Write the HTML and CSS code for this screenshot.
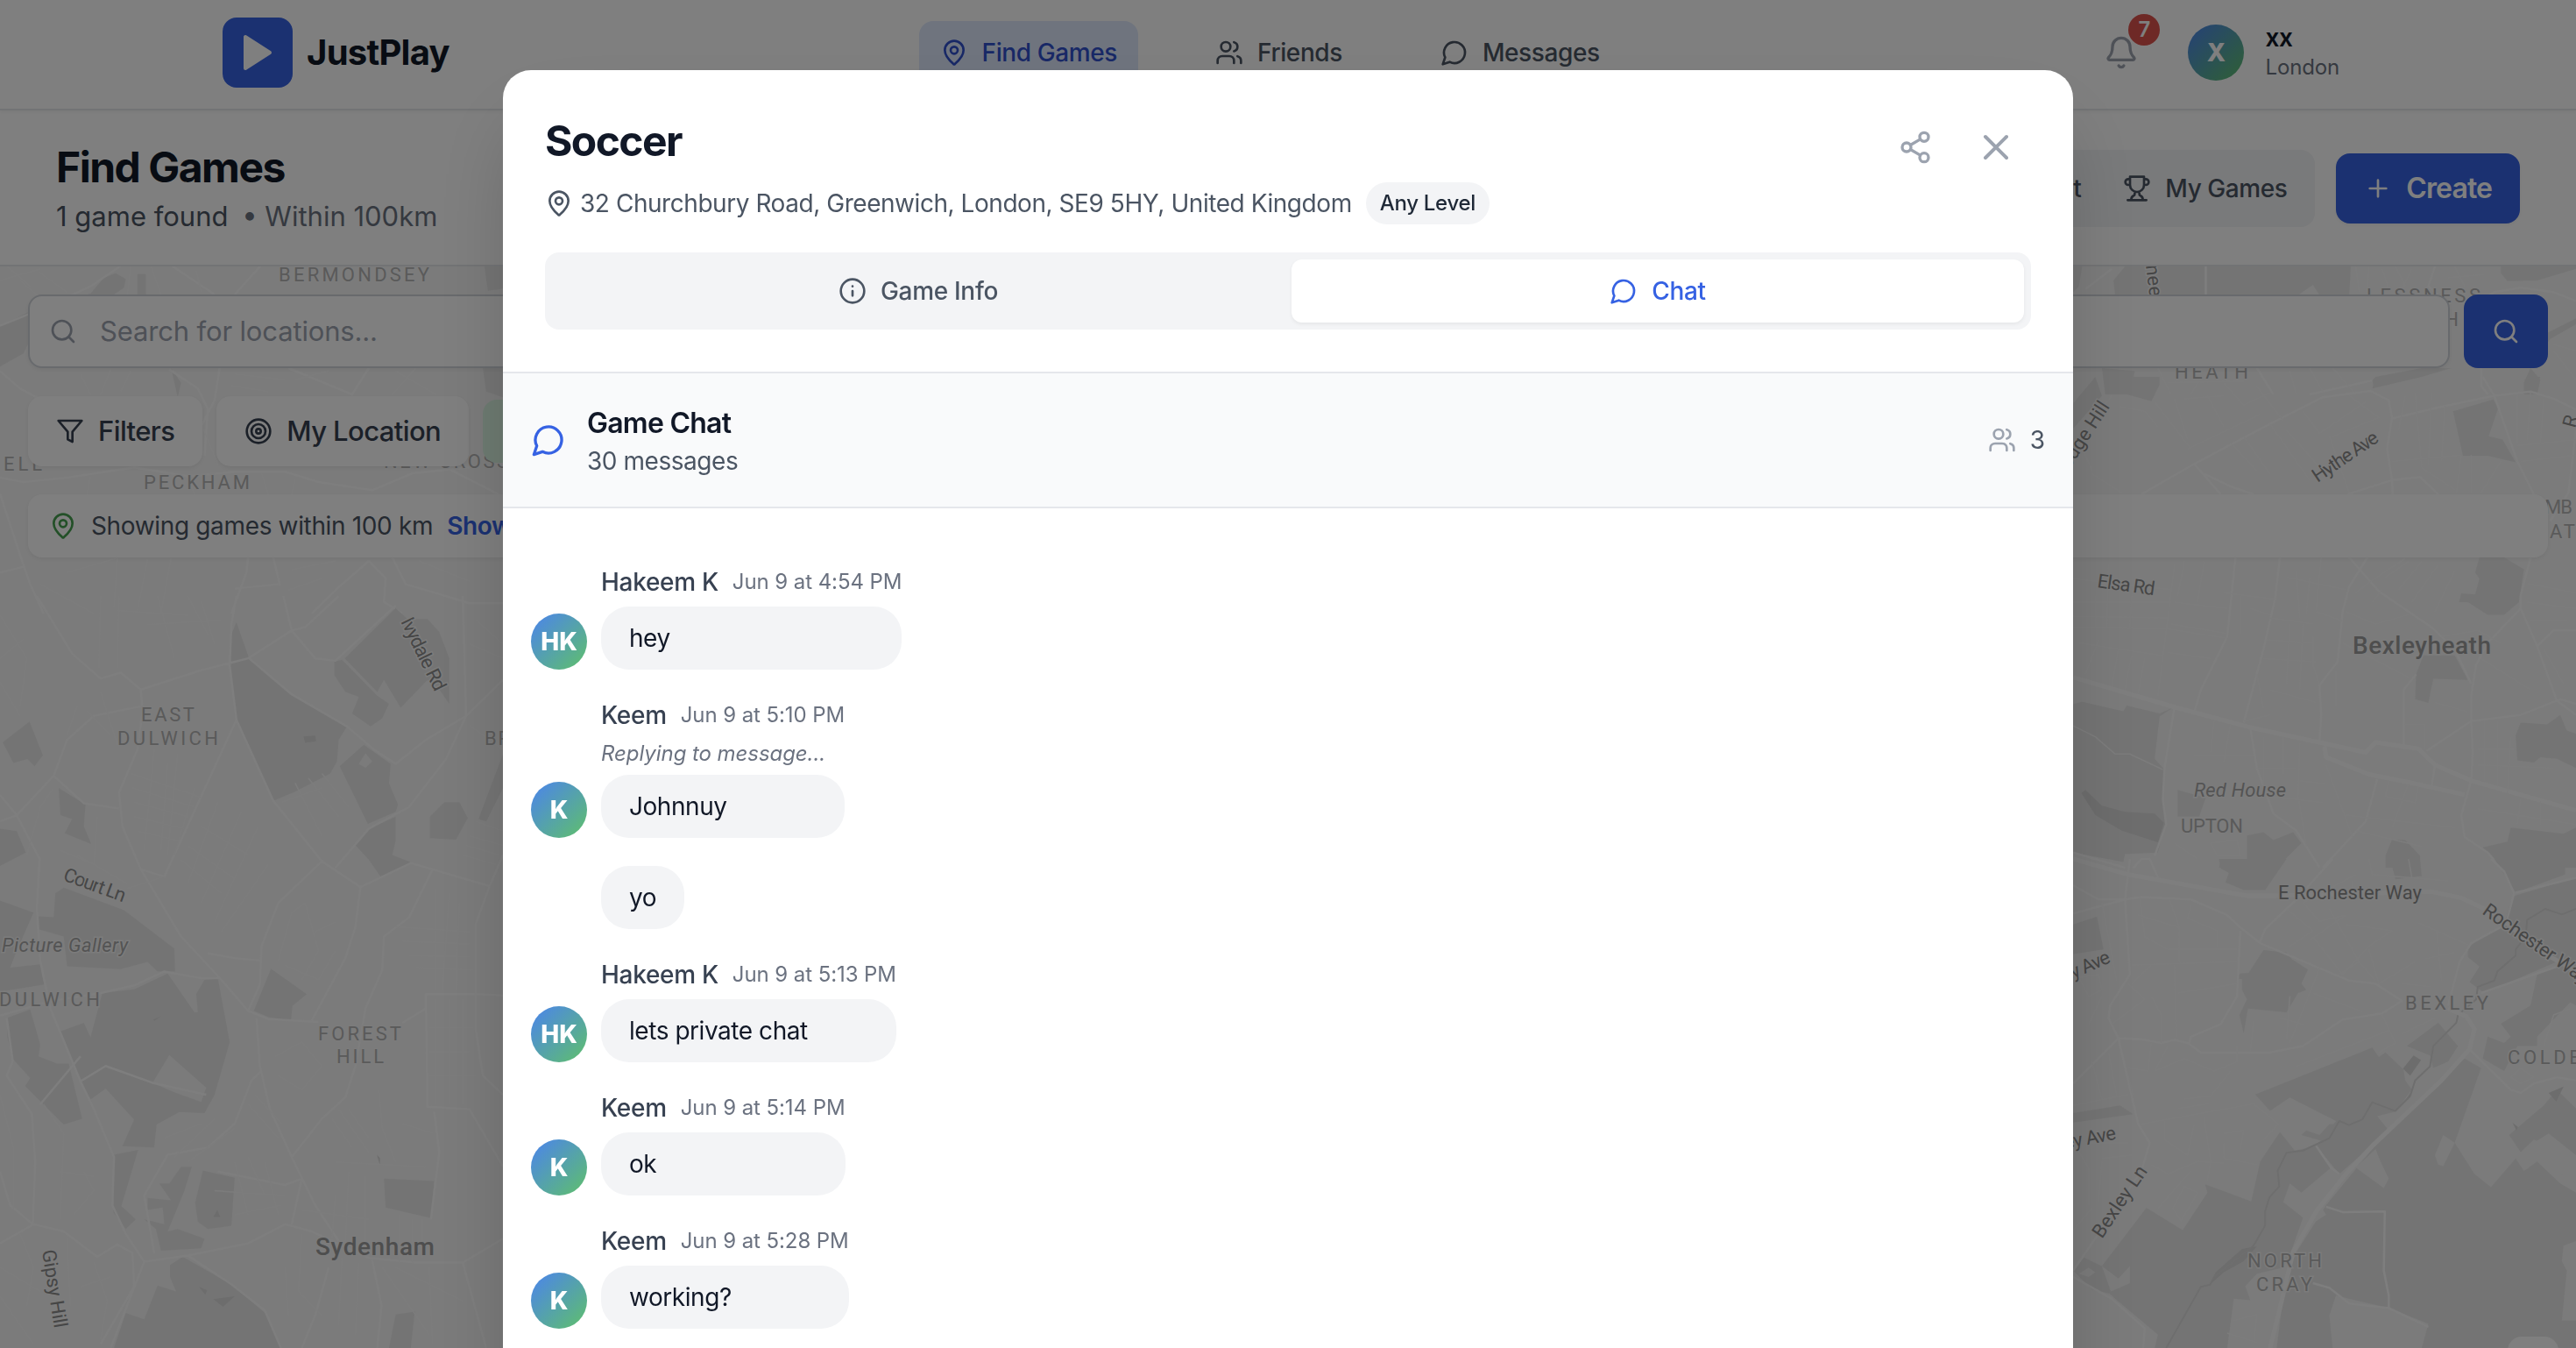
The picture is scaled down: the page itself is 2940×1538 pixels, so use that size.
FILE: index.html
```html
<!DOCTYPE html>
<html lang="en">
<head>
<meta charset="utf-8">
<title>JustPlay - Find Games</title>
<link rel="stylesheet" href="styles.css">
</head>
<body>
<svg class="sprite" aria-hidden="true">
  <symbol id="pin" viewBox="0 0 24 24"><path d="M20 10c0 4.993-5.539 10.193-7.399 11.799a1 1 0 0 1-1.202 0C9.539 20.193 4 14.993 4 10a8 8 0 0 1 16 0"/><circle cx="12" cy="10" r="3"/></symbol>
  <symbol id="users" viewBox="0 0 24 24"><path d="M16 21v-2a4 4 0 0 0-4-4H6a4 4 0 0 0-4 4v2"/><circle cx="9" cy="7" r="4"/><path d="M22 21v-2a4 4 0 0 0-3-3.87M16 3.13a4 4 0 0 1 0 7.75"/></symbol>
  <symbol id="message" viewBox="0 0 24 24"><path d="M7.9 20A9 9 0 1 0 4 16.1L2 22Z"/></symbol>
  <symbol id="bell" viewBox="0 0 24 24"><path d="M10.268 21a2 2 0 0 0 3.464 0M3.262 15.326A1 1 0 0 0 4 17h16a1 1 0 0 0 .74-1.673C19.41 13.956 18 12.499 18 8A6 6 0 0 0 6 8c0 4.499-1.411 5.956-2.738 7.326"/></symbol>
  <symbol id="trophy" viewBox="0 0 24 24"><path d="M6 9H4.5a2.5 2.5 0 0 1 0-5H6M18 9h1.500a2.500 2.500 0 0 0 0-5H18M4 22h16M10 14.660V17c0 .550-.470.980-.970 1.210C7.850 18.750 7 20.240 7 22M14 14.660V17c0 .550.470.980.970 1.210C16.150 18.750 17 20.240 17 22M18 2H6v7a6 6 0 0 0 12 0V2Z"/></symbol>
  <symbol id="plus" viewBox="0 0 24 24"><path d="M5 12h14M12 5v14"/></symbol>
  <symbol id="search" viewBox="0 0 24 24"><circle cx="11" cy="11" r="8"/><path d="m21 21-4.300-4.300"/></symbol>
  <symbol id="filter" viewBox="0 0 24 24"><path d="M22 3H2l8 9.460V19l4 2v-8.540L22 3Z"/></symbol>
  <symbol id="target" viewBox="0 0 24 24"><circle cx="12" cy="12" r="10"/><circle cx="12" cy="12" r="6"/><circle cx="12" cy="12" r="2"/></symbol>
  <symbol id="share" viewBox="0 0 24 24"><circle cx="18" cy="5" r="3"/><circle cx="6" cy="12" r="3"/><circle cx="18" cy="19" r="3"/><path d="m8.590 13.510 6.830 3.980M15.410 6.510l-6.820 3.980"/></symbol>
  <symbol id="close" viewBox="0 0 24 24"><path d="M18 6 6 18M6 6l12 12"/></symbol>
  <symbol id="info" viewBox="0 0 24 24"><circle cx="12" cy="12" r="10"/><path d="M12 16v-4M12 8h.010"/></symbol>
</svg>

<div class="page">
  <header class="topbar">
    <div class="topbar-inner">
      <div class="brand">
        <span class="brand-mark"><svg viewBox="0 0 80 80"><path d="M26 22v36L54 40Z" fill="#fff" stroke="#fff" stroke-width="4" stroke-linejoin="round"/></svg></span>
        <span class="brand-name">JustPlay</span>
      </div>
      <nav class="nav">
        <a class="nav-item active"><svg class="icon"><use href="#pin"/></svg>Find Games</a>
        <a class="nav-item"><svg class="icon"><use href="#users"/></svg>Friends</a>
        <a class="nav-item"><svg class="icon"><use href="#message"/></svg>Messages</a>
      </nav>
      <div class="account">
        <button class="bell"><svg class="icon icon-lg"><use href="#bell"/></svg><span class="badge">7</span></button>
        <div class="profile">
          <span class="avatar">X</span>
          <div><div class="profile-name">xx</div><div class="profile-place">London</div></div>
        </div>
      </div>
    </div>
  </header>

  <section class="subheader">
    <div>
      <h1 class="page-title">Find Games</h1>
      <p class="summary">1 game found <span class="summary-range">• Within 100km</span></p>
    </div>
    <div class="subheader-actions">
      <div class="segments">
        <button class="segment">List</button>
        <button class="segment"><svg class="icon"><use href="#trophy"/></svg>My Games</button>
      </div>
      <button class="create"><svg class="icon"><use href="#plus"/></svg>Create</button>
    </div>
  </section>

  <main class="map-area">
    <svg class="map" viewBox="0 304 2940 1234">
      <rect class="land" y="304" width="2940" height="1234"/>
      <!-- north-west -->
      <g transform="translate(0 300) scale(.3827 .3333)">
        <path class="park" d="M0 215 80 170 270 105 310 50 345 35 375 55 370 85 340 108 200 140 100 240 70 310 0 355ZM410 38h25v70h-25ZM1445 12h60v75l-50 8ZM510 360l30 50-10 50zM1440 360h60v100l-50-20z"/>
        <path class="road" d="M0 215 130 155 270 80 360 10M0 370 60 430 110 460M500 0 640 108M785 0 700 108M505 365 590 430 620 500 610 660M860 360 1050 450 1100 360M655 360 640 470 600 560M0 735 70 750 200 735 400 700 560 730 700 715 850 715 950 750 1110 778 1230 720 1400 700M0 790 60 1000 90 1100 130 1200M0 1060 70 1040M740 1008 735 1060 690 1200M815 1008 835 1105M700 1115 830 1100M1100 1020 1010 1110 930 1200M1100 1020 1150 1080 1145 1160 1200 1200M1170 1008 1210 1100 1300 1130 1400 1165 1500 1165M1300 550 1330 700 1500 800"/>
        <path class="street" d="M20 10 90 80M0 60 120 20M60 60 150 150M115 30 200 100M380 108 390 10M450 10 480 108M585 25 600 100M240 380 270 450M330 365 300 450M390 370 360 440M700 380 850 400M690 420 800 440M880 400 980 370M1180 370 1300 450M1240 360 1170 450M600 550 650 690M120 1100 280 1200M200 1060 350 1010M350 1010 340 1180M440 1015 410 1190M510 1010 480 1200M870 1050 1000 1020M860 1120 960 1080M1250 1020 1400 1090M880 740 870 790M780 720 800 790M560 735 580 790M270 730 260 790"/>
      </g>
      <!-- south-west -->
      <g transform="translate(0 680) scale(.3827 .5472)">
        <path class="park" d="M687 145 690 80 705 55 743 130 870 205 1035 272 1010 300 1005 345 985 370 880 408 815 427 703 258ZM1028 130 1180 25 1215 48 1275 48 1310 75 1340 130V225L1310 195 1275 175 1195 233 1145 175 1125 200ZM997 137 1020 133 1125 208 1160 225 1140 255 1105 272 1050 245 1070 210 1030 200 997 165ZM1013 355 1085 310 1165 350 1160 390 1187 435 1180 450 1097 475ZM1058 518 1100 485 1180 460V510L1170 540 1225 555 1137 587 1100 550ZM1282 460 1325 430H1370L1395 463 1360 508 1282 505ZM8 305 88 262 128 332 103 355 82 340 40 348ZM175 400 255 435 250 480 272 517 193 495 215 465 180 457ZM0 485 50 490 77 535 0 563ZM165 620 190 608 370 655 520 735 522 783H470L440 763 360 778 200 772 190 710 115 695V668L160 670ZM0 635 100 660 50 740 30 775 120 768 132 810 0 825ZM180 908 250 890 270 920 305 828 400 820 500 787 580 868H590L585 830 610 800 650 798 685 930 640 1040 610 1078 535 1076 467 1102 460 1150 365 1147 400 1092 315 1027 270 1050 240 1012ZM20 880 90 862 120 935 115 960 170 975H205L245 1090 190 1102 75 1022 90 1005 38 965 22 920ZM757 865 808 777 915 830 872 855 868 885 800 878ZM340 1165 412 1155 362 1272 405 1300 375 1320 338 1285ZM605 1198 700 1213 690 1313 620 1320 590 1305 582 1265ZM1145 1215 1295 1220 1285 1297 1150 1275ZM340 1568 375 1495 430 1508 470 1438 525 1450 507 1420V1395L545 1378 690 1435 790 1495 838 1568ZM1160 1568 1180 1498 1237 1492 1225 1568ZM1427 465 1500 330V400L1450 470ZM430 1300 490 1310 485 1275 440 1280V1255L510 1260 475 1225 505 1225 540 1190H572L550 1240 500 1325 530 1320 610 1340 600 1360 480 1365 465 1320Z"/>
        <path class="land" d="M455 1015 505 957 615 1025 600 1055 520 1035ZM1070 350 1090 328 1110 345 1090 358Z"/>
        <path class="water" d="M905 293 940 291 943 303 910 306ZM636 1466 700 1460 665 1482ZM593 1440 618 1448 612 1457ZM636 1295 648 1280 657 1295ZM457 883 481 876 460 886ZM1124 1165 1133 1172V1187Z"/>
        <path class="road" d="M110 0 215 120 300 172 360 160 420 195 425 240 410 320 355 410 365 480 420 570 540 710 660 800 740 865 800 882 950 888M420 195 600 155 740 130 870 72 910 65 1010 0M705 0 690 60 685 145 705 258 815 427 960 553 1075 607 1225 557 1290 570 1460 605M743 130 870 205 1035 272 1115 320 1180 350 1270 300 1390 250 1500 175M420 230 280 250 200 300 160 375 50 457 0 470M160 375 250 432 355 443M0 415 50 457 118 548 110 650 120 760 150 860 240 1012 280 1070 340 1170 335 1270 375 1330 430 1388M0 875 150 845 300 828 400 812 490 783 600 797 655 797M765 880 775 980 805 1070 870 1170 940 1270 1010 1345M870 1170 960 1090 1030 1045 1060 980 1090 860 1140 780 1145 710 1220 670 1290 570M0 1350 100 1310 190 1325 290 1378 350 1352 395 1370 400 1440 300 1560M330 1568 430 1388 560 1375 740 1350 850 1310 930 1325 1100 1380 1240 1390H1380L1500 1340M560 1375 690 1435 790 1490 838 1568M500 1165 430 1250 460 1370M500 1165 620 1150 700 1100 750 1010 780 990M960 553 830 640 780 730 775 810 740 865M1000 567 1100 485 1220 440 1330 340 1390 250 1380 0M845 0 870 72 940 130 1000 135 1180 20M1075 607 1060 690 1030 755 930 885M1460 605 1418 685V900L1440 1000 1500 1040M1270 830 1275 1065 1400 1070 1500 1190M1295 1075 1310 1160 1285 1300M1200 890 1270 860V830H1420L1500 833M20 880 38 970 20 1000 95 1080 105 1180 98 1310M120 1060 240 960M705 258 490 585 420 570M650 1200 850 1228 900 1215 870 1310M1110 1385 1138 1480 1125 1568M980 1400 940 1500 900 1568M1500 540 1460 605M1380 1390 1450 1568M0 1200 30 1270 98 1310M620 745 700 755 775 760M240 1012 315 980 455 1015 615 1040"/>
        <path class="street" d="M355 0 350 150M300 0 295 150M350 30 560 40M470 0 520 130M560 0 620 80M440 60 660 50M600 10 640 100M230 230 200 290M260 240 330 290M300 200 350 310M390 370 600 420M395 400 580 440M400 430 560 460M400 460 550 485M410 490 530 510M460 320 430 530M500 350 480 530M530 330 500 540M580 400 520 540M560 520 700 590M540 550 660 620M600 480 740 540M650 430 560 600M720 450 600 640M770 480 640 680M800 560 660 700M880 390 960 500M920 380 1010 460M960 370 1040 440M840 430 960 400M1400 500 1500 520M1390 520 1490 540M1380 540 1480 560M1420 470 1500 490M1180 690 1400 700M1200 720 1400 725M1220 750 1400 752M1240 775 1410 780M1300 610 1300 820M1340 620 1320 820M1370 640 1360 820M1300 840V1060M1340 840V1060M1380 840V1060M1280 900H1410M1280 950H1400M1280 1000H1420M830 760 870 660 910 640M910 640 950 740 900 800M850 770 950 800 1000 740M940 700 1000 680M820 960 900 930 960 980 900 1030 830 1000M740 1060 830 1130M760 1040 840 1100M990 1090 1050 1150M1010 1070 1100 1160M1040 1070 1100 1130M1130 1030 1140 1110 1180 1180M1200 1100 1290 1120M1000 1180 1270 1190M900 1280 1100 1300M1000 1250 990 1340M1040 1200 1030 1350M1090 1210V1360M1190 1290V1390M1230 1300V1390M1260 1300V1380M130 1060 190 1120 180 1300M250 1200 280 1240 220 1290M0 1040 40 1150V1280M180 1200 280 1210M490 1130 600 1100M520 1170 640 1090M560 1180 700 1110M700 1180 740 1290M740 1170 790 1250M790 1180 830 1290M640 1240 850 1250M700 1290 840 1270M60 1330 100 1400 80 1480M0 1400 120 1450M0 1460 100 1560M200 1340 210 1480M280 1390 320 1470 300 1550M240 1440 330 1420M850 1400 860 1500M900 1330 890 1450 960 1500M1020 1380 1010 1520M1070 1390 1060 1540M1140 1400 1280 1540M1180 1400 1380 1470M1280 1400 1290 1560M1400 100 1500 130M1420 50 1500 100M1400 270 1500 320M0 40 80 130 60 230M0 130 70 90M0 180 60 250M80 540 120 440 160 400M290 460 280 560 180 530M230 540 380 600M380 610 490 585"/>
      </g>
      <!-- north-east -->
      <g transform="translate(2350 0) scale(.3763 .3333)">
        <path class="park" d="M43 912H70L60 980 43 1000ZM200 912H885L880 1010H790L770 975 725 1010H170L165 960ZM1340 912H1568V920L1450 960 1360 962 1340 935ZM1400 1200 1480 1140 1568 1090V1110L1490 1160 1440 1235 1420 1260ZM130 1260 230 1270 215 1350H140ZM950 1330 960 1290 1100 1260H1190L1100 1290ZM1410 1310 1430 1260 1460 1300 1450 1350H1410Z"/>
        <path class="road" d="M445 912V1010M80 990 160 920M1230 1060 1320 1000 1400 985 1500 1000 1568 1030M1280 1240V1320L1300 1350M1140 912 1120 980 1150 1010M760 1350 960 1300M600 1260 650 1350"/>
        <path class="street" d="M900 912 910 1000M940 912 935 1000M980 920 1000 990M1020 912 1050 980M1070 920 1040 990M1200 912 1230 980M1180 950 1290 940M1500 1180 1568 1200M1500 1200 1568 1300M330 1310 560 1305M300 1260 340 1350M420 1310 400 1350M700 1270 720 1350M760 1260 800 1340M830 1260 900 1350"/>
      </g>
      <!-- east -->
      <g transform="translate(2350 430) scale(.3763 .3571)">
        <path class="park" d="M1195 110 1317 72 1332 100 1303 190 1345 200 1385 273 1300 252H1225ZM1275 577H1350L1410 615 1395 720 1350 760H1300L1240 720H1213L1220 692 1262 695 1275 645 1262 625ZM1105 890H1200L1240 968 1135 965 1120 1042 1080 1030 1083 950ZM43 1045 70 1038 195 1068 205 1050 305 1075 345 1057 305 1085 290 1220 320 1255 315 1350 322 1430 300 1520 200 1525 195 1550 43 1520ZM360 1320 445 1345 425 1405H360ZM1385 1145 1400 1105 1480 1110 1520 1080 1540 1130 1568 1140V1250L1510 1220 1460 1215 1440 1232 1390 1225ZM570 1465 620 1455 650 1480 710 1455 735 1490 660 1568H485L490 1550 570 1545ZM1285 1503 1360 1485 1370 1440 1530 1460 1568 1440V1568H1340ZM990 1530 1010 1478 1050 1480 1095 1530V1568H990ZM175 20 210 0H305V25L280 78 185 50ZM43 85 110 0 130 60 43 165ZM950 10 960 0H1030L955 35ZM1410 10 1430 0H1460L1450 20Z"/>
        <path class="water" d="M68 1330 80 1320 130 1370 200 1390 290 1395 318 1425 300 1487 190 1450 110 1400Z"/>
        <path class="road" d="M250 375 410 278 640 150 800 65 945 45 1000 75 1010 130 995 230 1010 330 1012 375M1010 133 1140 100 1320 60 1430 47 1500 70 1568 105M1285 0 1320 60 1340 120 1390 270 1440 375M875 375 1010 330 1095 320 1150 375M410 278 490 375M440 310 520 350 590 375M535 577 510 830 430 1000 412 1065M670 577 655 710 620 870 560 1105M935 577 880 670 860 750 845 910 790 985 795 1080 790 1165M880 577 970 685 1130 800 1200 870 1250 980M1430 577 1400 700V740L1300 850 1265 920 1250 1020V1100L1255 1200 1250 1290 1220 1400 1230 1470 1300 1520 1340 1568M1400 740 1450 860 1510 1035 1568 1080M1115 1195 1250 1100 1400 1080 1520 1030 1568 1045M350 1055 320 1250 315 1350 325 1430 290 1530M965 1285 930 1420 800 1568M580 1120 600 1250 650 1395 720 1450 790 1568M43 1520 200 1568M1568 170 1545 370 1490 460M1083 950 1045 1000V1190M1450 860 1500 810H1568M1140 1240 1130 1310"/>
        <path class="avenue" d="M43 960 350 1055 580 1120 930 1200 960 1168 1090 1188 1140 1240 1250 1290 1450 1350 1568 1385M805 1180 810 1215 940 1270 1060 1295 1230 1335"/>
        <path class="street" d="M43 1115 110 1150 170 1205H215L315 1255M160 60 40 230M185 95 260 110 300 160M290 80 400 230M380 70 500 60M350 70 390 200M390 230 610 120M450 60 500 160M600 30 680 140M500 20 560 90 640 50M520 210 600 300M560 190 640 310M640 150 760 330M690 170 800 300M740 110 790 180 930 80M820 190 880 370M880 60 970 130 830 190M1050 60 1030 170M1080 50 1100 290M1130 50 1120 280M1170 90 1160 270M1220 250 1205 370M1100 290 1200 360M1010 270 1220 250M1250 250V370M1340 270 1280 370M1390 60V210M1430 50 1420 200M1390 220 1568 200M1470 70 1460 210M1400 270 1568 250M100 300 60 200M100 310 190 370M43 645 340 680M43 720H340M43 765 330 770M43 800 330 805 510 835M110 700V800M150 600 145 800M220 700 215 800M350 600 300 1020M380 590 360 700M440 590 420 720M350 720 510 740M340 790 510 820M330 880 460 900M120 840 80 950M180 870 160 990M220 890 200 1000M260 900 240 1010M60 850 310 890M550 700V820M500 690 655 710M580 740 640 760M690 640 870 680M720 620 730 770M760 640 750 760M640 770 770 790M630 840 770 850M620 900 780 910M700 790 690 980M740 790 730 1000M600 950 620 1060M640 1000 780 1040M560 1100 640 1080M780 750 860 780M795 577 780 745M770 830V920L790 985M840 940V1050M870 750 960 790 1060 760M900 690 950 650 1050 580M950 720 980 680M990 640 1060 590M1030 680 1100 590M1070 720 1150 600M1140 750 1200 620M860 850 1060 960M1160 830 1270 810 1340 850M1280 900 1430 1000M1430 780H1540M1420 720 1568 740M1420 660 1568 690M1470 870 1530 980M1050 1110H1110V1190M1140 1040 1240 1070M1290 1100V1290M1330 1100V1310M1370 1150 1360 1330M1270 1190H1380M1270 1240 1500 1250M470 1100 460 1200M520 1110 500 1230M410 1210 590 1210M600 1250 720 1250M620 1150V1300M680 1150V1270M730 1170 725 1340 750 1500M730 1290 810 1300M640 1340 800 1360M810 1240 890 1470M1000 1290 990 1340 1080 1360 1090 1310M1060 1300 1010 1440M870 1400 1200 1440M900 1450 1100 1500M460 1490 540 1480 550 1530 480 1530ZM350 1490 420 1540M1270 1380 1568 1430M1400 1350 1390 1430M1460 1355V1430"/>
      </g>
      <!-- south-east -->
      <g transform="translate(2350 980) scale(.3763 .3559)">
        <path class="park" d="M485 0H690L625 100H560L505 75 515 45 490 30ZM1005 0H1095L1100 55 1020 65ZM1320 0H1535V50L1385 108ZM43 210 115 185 135 290 43 305ZM575 365 620 292 690 300 705 320 755 355 735 400 750 420 725 430 690 492 573 480 560 560 547 500 570 450 555 420V385H540V368ZM1375 120 1568 60V370L1530 320 1290 430 1245 395 1275 345 1240 315V285L1270 260 1350 210ZM1450 370 1568 325V470L1550 460 1450 570V600L1390 600 1350 680 1285 640 1300 570 1350 590 1370 570 1340 528 1430 470ZM1055 600 1150 525 1210 600 1180 650 1135 670 1125 630ZM595 755 950 605 970 635 990 620 1045 675 1050 710 1070 740 1020 810 965 825 1000 870 850 1010 780 920 840 840 700 765 640 808ZM43 815 185 790 225 818 43 845ZM670 875 715 935 780 920 825 990 735 1070 700 1040 680 1100 740 1150 700 1270 680 1310 600 1330 565 1370 580 1415 530 1410 510 1568H290L300 1525 170 1410 150 1390 215 1360 215 1305 180 1345 130 1305 265 1118 375 1190 450 1070 443 1043 583 1098 610 970ZM43 1320 75 1278 130 1305 160 1395 100 1380ZM1230 640 1280 670 1200 910 1260 1010 1310 1052 1385 960 1410 1000 1450 970 1520 1040 1568 1070V1568H1100L1120 1490 1000 1440 880 1425 840 1400 820 1465 830 1568H660L680 1400 690 1330 720 1260 810 1110 950 930 1110 765ZM1365 885 1470 790 1510 740 1568 800V960L1440 900 1400 940ZM735 885 750 870 790 885 820 850 840 850 800 905ZM1480 850 1500 840 1510 860Z"/>
        <path class="land" d="M900 990 960 930 975 970 1000 1025 985 1055ZM1140 950 1165 885 1200 910 1165 985 1150 980ZM1530 1240 1568 1225V1480H1525L1540 1320 1525 1290ZM840 1400 1000 1440 1020 1480 980 1500 910 1495 820 1465ZM1440 910 1485 880 1568 950V1040L1510 1000H1485ZM60 1330 90 1310 110 1325 90 1340ZM835 1535H900V1568H835ZM790 1110 810 1140 740 1190Z"/>
        <path class="water" d="M1043 672 1075 630 1098 645 1065 695ZM1485 750 1530 730 1508 778ZM600 1242 555 1250 475 1325 458 1365 500 1325 560 1290ZM1375 845 1392 860 1387 870ZM1050 775 1075 735 1060 770Z"/>
        <path class="river" d="M1568 160 1525 178 1475 160 1420 195 1415 250 1385 290V310L1330 360 1320 390 1270 410 1265 450 1210 500 1205 525 1135 600 1125 665 1080 710 1065 760 1020 808 950 780 920 835 880 853 850 840 820 895 740 935 690 942 663 1000 668 1050 638 1085 625 1130V1175L590 1240 470 1340 458 1365 430 1372 325 1568"/>
        <path class="avenue" d="M43 0 210 50 500 105 570 118H660L1130 105 1220 125 1330 180 1450 290 1568 360M1180 480 1235 505 1260 545 1245 610 1160 710 1110 760 950 920 870 1010 780 1130 710 1260 670 1440 640 1568"/>
        <path class="road" d="M1310 0 1350 40 1380 110 1355 210 1250 270 1215 330 1180 470M1245 610 1370 740 1400 750 1440 720 1510 700 1568 710M215 0 200 130 215 370 155 470 150 510 180 575 240 850 275 910 250 1000 43 1320M180 575 250 578 310 590 350 580 390 590 430 620H640L740 600 860 515 980 495 1040 455 960 400 880 390 790 350 610 270 550 220 510 180 400 130 250 122 200 130M550 230 545 330 540 440 490 530 400 570 395 590M180 575 43 720M1385 108 1568 60M43 85 120 130 200 130 43 175M610 265 625 225 720 130M225 30 250 0H275L300 60M830 0 720 130M1280 430 1550 330M810 1115 860 1132 988 1130 985 1320 1000 1400V1440M43 1340 160 1410 260 1505 255 1568M780 920 825 990 850 1010M770 1360 820 1375 880 1425 1000 1440 1120 1500"/>
        <path class="street" d="M130 140 175 390M245 120 260 250 330 290 540 290M335 130 365 220V330M220 340 540 330M365 220 240 180M400 150 390 190 480 230V280M350 340 355 570M210 400 260 450 160 530M280 440 310 500V590M220 400 280 340M360 430 540 400M690 160 770 230 700 280M740 140 790 200 870 180 760 260M820 160 910 330 960 390M770 250 860 370 940 280 1010 230 870 210M910 330 850 370M940 290 970 400 1080 330M1090 205 1240 275M1145 230 1160 390M1110 320 1200 300M1040 400 1130 410M790 350 700 590M770 430 920 490M700 440 690 580M590 520 580 620M670 510 740 530M1040 560 1140 510M720 665 1000 550M980 500 1020 590 970 620M150 620 175 760M100 650 130 770M210 690 230 790M43 790 210 755M280 590 270 680 210 670M330 600 290 680 380 640 470 680 540 650V600M520 680 460 760 380 770M360 800 455 785M250 850 590 785 665 850 620 900M320 840V900L390 950 410 850M440 830 460 970 450 1030M500 880 560 870 550 930M500 910V960L600 980M280 980 330 1010 420 970 500 975M130 960 220 950M80 910H210M43 910 90 990V1110M120 1100 130 970M43 1190 100 1120M300 1120 400 1000M345 1120 370 1160 420 1070 380 1050ZM740 140 900 50M60 380 120 370 130 420 90 440ZM90 530 130 440M1470 600 1500 500 1550 480M1370 700 1400 670 1440 700 1400 720ZM530 1480 600 1460 590 1568M510 1520 600 1550M1060 0 1070 60M940 0 950 50 1180 70M890 70V120"/>
      </g>
      <g class="place">
        <text x="318" y="321" textLength="172">BERMONDSEY</text>
        <text x="4" y="537" textLength="44">ELL</text>
        <text x="164" y="558" textLength="121">PECKHAM</text>
        <text x="438" y="534" textLength="142">NEW CROSS</text>
        <text x="2482" y="432" textLength="84">HEATH</text>
        <text x="2701" y="345" textLength="130">LESSNESS</text>
        <text x="2722" y="372" textLength="84">HEATH</text>
        <text x="161" y="823" textLength="61">EAST</text>
        <text x="134" y="850" textLength="115">DULWICH</text>
        <text x="553" y="850" textLength="120">BROCKLEY</text>
        <text x="-1" y="1148" textLength="115">DULWICH</text>
        <text x="363" y="1187" textLength="95">FOREST</text>
        <text x="384" y="1213" textLength="54">HILL</text>
        <text x="2489" y="950" textLength="71">UPTON</text>
        <text x="2904" y="586" textLength="32">MB</text>
        <text x="2910" y="614" textLength="29">AT</text>
        <text x="2745" y="1152" textLength="95">BEXLEY</text>
        <text x="2862" y="1214" textLength="84">COLDB</text>
        <text x="2565" y="1446" textLength="85">NORTH</text>
        <text x="2575" y="1473" textLength="64">CRAY</text>
      </g>
      <g class="landmark">
        <text x="2" y="1086" textLength="144">Picture Gallery</text>
        <text x="2504" y="909" textLength="105">Red House</text>
      </g>
      <g class="town">
        <text x="360" y="1432" textLength="136">Sydenham</text>
        <text x="2685" y="746" textLength="158">Bexleyheath</text>
      </g>
      <g class="way">
        <text transform="translate(71 1004) rotate(20)" textLength="74">Court Ln</text>
        <text transform="translate(457 709) rotate(64)" textLength="90">Ivydale Rd</text>
        <text transform="translate(48 1427) rotate(81)" textLength="90">Gipsy Hill</text>
        <text transform="translate(2355 546) rotate(-57)" textLength="98">Lodge Hill</text>
        <text transform="translate(2645 551) rotate(-34)" textLength="86">Hythe Ave</text>
        <text transform="translate(2393 670) rotate(8)" textLength="66">Elsa Rd</text>
        <text x="2600" y="1026" textLength="164">E Rochester Way</text>
        <text transform="translate(2832 1042) rotate(35)" textLength="142">Rochester Way</text>
        <text transform="translate(2357 1121) rotate(-24)" textLength="58">ey Ave</text>
        <text transform="translate(2357 1311) rotate(-11)" textLength="60">ey Ave</text>
        <text transform="translate(2399 1414) rotate(-56)" textLength="94">Bexley Ln</text>
        <text transform="translate(2449 303) rotate(83)" textLength="36">nee</text>
        <text transform="translate(2939 489) rotate(-75)">R</text>
      </g>
    </svg>

    <div class="map-tools">
      <div class="search-row">
        <label class="search-box"><svg class="icon"><use href="#search"/></svg><span>Search for locations...</span></label>
        <button class="search-button"><svg class="icon"><use href="#search"/></svg></button>
      </div>
      <div class="chips">
        <button class="chip"><svg class="icon"><use href="#filter"/></svg>Filters</button>
        <button class="chip"><svg class="icon"><use href="#target"/></svg>My Location</button>
        <span class="chip-near"></span>
      </div>
      <div class="notice"><svg class="icon"><use href="#pin"/></svg><span>Showing games within 100 km</span><a>Show all</a></div>
    </div>
    <span class="map-control"></span>
  </main>
</div>

<div class="overlay">
  <div class="modal">
    <div class="modal-head">
      <div class="title-row">
        <div>
          <h2 class="modal-title">Soccer</h2>
          <div class="venue"><svg class="icon"><use href="#pin"/></svg><span class="address">32 Churchbury Road, Greenwich, London, SE9 5HY, United Kingdom</span><span class="level">Any Level</span></div>
        </div>
        <div class="modal-actions">
          <button class="plain"><svg class="icon icon-lg"><use href="#share"/></svg></button>
          <button class="plain"><svg class="icon icon-xl"><use href="#close"/></svg></button>
        </div>
      </div>
      <div class="tabs">
        <button class="tab"><svg class="icon"><use href="#info"/></svg>Game Info</button>
        <button class="tab selected"><svg class="icon"><use href="#message"/></svg>Chat</button>
      </div>
    </div>
    <div class="chat-head">
      <svg class="icon icon-lg"><use href="#message"/></svg>
      <div class="chat-heading"><div class="chat-title">Game Chat</div><div class="chat-count">30 messages</div></div>
      <div class="members"><svg class="icon"><use href="#users"/></svg>3</div>
    </div>
    <div class="messages">
      <div class="message"><span class="avatar">HK</span><div class="body"><div class="meta"><span class="author">Hakeem K</span><time>Jun 9 at 4:54 PM</time></div><div class="bubble">hey</div></div></div>
      <div class="message"><span class="avatar">K</span><div class="body"><div class="meta"><span class="author">Keem</span><time>Jun 9 at 5:10 PM</time></div><div class="reply">Replying to message...</div><div class="bubble">Johnnuy</div></div></div>
      <div class="message follow"><div class="body"><div class="bubble">yo</div></div></div>
      <div class="message"><span class="avatar">HK</span><div class="body"><div class="meta"><span class="author">Hakeem K</span><time>Jun 9 at 5:13 PM</time></div><div class="bubble">lets private chat</div></div></div>
      <div class="message"><span class="avatar">K</span><div class="body"><div class="meta"><span class="author">Keem</span><time>Jun 9 at 5:14 PM</time></div><div class="bubble">ok</div></div></div>
      <div class="message"><span class="avatar">K</span><div class="body"><div class="meta"><span class="author">Keem</span><time>Jun 9 at 5:28 PM</time></div><div class="bubble">working?</div></div></div>
    </div>
  </div>
</div>
</body>
</html>
```
FILE: styles.css
```css
* { box-sizing: border-box; }
body { margin: 0; height: 1538px; overflow: hidden; font: 28px/40px Inter, "Liberation Sans", sans-serif; letter-spacing: -.45px; color: #111827; background: #fff; }
h1, h2, p { margin: 0; }
button { font: inherit; color: inherit; letter-spacing: inherit; border: 0; background: none; padding: 0; }
.sprite { position: absolute; width: 0; height: 0; }
.icon { width: 32px; height: 32px; flex: none; display: block; fill: none; stroke: currentColor; stroke-width: 2; stroke-linecap: round; stroke-linejoin: round; }
.icon-lg { width: 40px; height: 40px; }
.icon-xl { width: 48px; height: 48px; }
.avatar { width: 64px; height: 64px; flex: none; border-radius: 50%; display: flex; align-items: center; justify-content: center; color: #fff; font-weight: 800; letter-spacing: 0; background: linear-gradient(135deg, #4b83ee, #5fc06a); }

.page { height: 1538px; display: flex; flex-direction: column; overflow: hidden; }
.topbar { position: relative; flex: none; height: 126px; border-bottom: 2px solid #e5e7eb; box-shadow: 0 2px 4px rgba(0,0,0,.05); padding-bottom: 4px; }
.topbar-inner { width: 2560px; height: 120px; margin: 0 auto; padding: 0 64px; display: flex; align-items: center; justify-content: space-between; }
.brand { display: flex; align-items: center; gap: 16px; }
.brand-mark { width: 80px; height: 80px; border-radius: 16px; background: #3662e3; }
.brand-mark svg { display: block; width: 80px; height: 80px; }
.brand-name { font-size: 40px; font-weight: 700; letter-spacing: -.75px; }
.nav { display: flex; gap: 64px; font-weight: 500; color: #4b5563; letter-spacing: -.4px; }
.nav-item { display: flex; align-items: center; gap: 16px; height: 72px; padding: 0 24px; border-radius: 16px; }
.nav-item.active { background: #dfe9fd; color: #3151cd; }
.account { display: flex; align-items: center; gap: 24px; }
.bell { position: relative; padding: 16px; color: #9ca3af; }
.badge { position: absolute; top: -8px; right: -8px; width: 36px; height: 36px; border-radius: 50%; background: #dd524c; color: #fff; font-size: 24px; font-weight: 600; line-height: 36px; text-align: center; letter-spacing: 0; }
.profile { display: flex; align-items: center; gap: 24px; padding: 0 16px; }
.profile-name { font-size: 28px; font-weight: 600; line-height: 32px; padding-top: 2px; }
.profile-place { font-size: 24px; line-height: 36px; color: #6b7280; letter-spacing: -.15px; }

.subheader { flex: none; height: 178px; padding: 2px 64px 0; display: flex; align-items: center; justify-content: space-between; border-bottom: 2px solid #e5e7eb; }
.page-title { font-size: 48px; line-height: 64px; font-weight: 700; letter-spacing: -1.5px; }
.summary { font-size: 31px; line-height: 48px; color: #4b5563; letter-spacing: 0; }
.summary-range { color: #6b7280; margin-left: 7px; }
.subheader-actions { display: flex; align-items: center; gap: 24px; }
.segments { display: flex; padding: 8px; height: 88px; border-radius: 16px; background: #f3f4f6; font-weight: 500; color: #4b5563; }
.segment { display: flex; align-items: center; gap: 16px; padding: 0 24px; }
.create { display: flex; align-items: center; gap: 16px; height: 80px; padding: 0 32px; border-radius: 16px; background: #3662e3; color: #fff; font-size: 32px; font-weight: 600; letter-spacing: -.9px; box-shadow: 0 2px 4px rgba(0,0,0,.05); }

.map-area { position: relative; flex: 1; min-height: 0; overflow: hidden; }
.map { position: absolute; left: 0; top: 0; width: 2940px; height: 1234px; letter-spacing: 0; }
.land { fill: #f6f6f6; }
.park { fill: #e9e9e9; }
.water { fill: #dadada; }
.river, .road, .avenue, .street { fill: none; stroke-linejoin: round; vector-effect: non-scaling-stroke; }
.river { stroke: #dcdcdc; stroke-width: 2px; }
.road { stroke: #fcfcfc; stroke-width: 2.5px; }
.avenue { stroke: #fdfdfd; stroke-width: 5px; }
.street { stroke: #f9f9f9; stroke-width: 1.5px; }
.map text { font-family: "Roboto", sans-serif; font-size: 22px; paint-order: stroke; stroke: #f8f8f8; stroke-width: 3px; }
.place { fill: #b4b4b4; }
.landmark { fill: #a8a8a8; font-style: italic; }
.map .town text { font-size: 28px; font-weight: 500; }
.town { fill: #9c9c9c; }
.way { fill: #8d8d8d; }
.map-tools { position: relative; padding: 32px; display: flex; flex-direction: column; gap: 32px; }
.search-row { display: flex; gap: 16px; }
.search-box { flex: 1; height: 84px; border: 2px solid #d1d5db; border-radius: 16px; background: #fff; padding: 0 22px; display: flex; align-items: center; gap: 26px; font-size: 31px; letter-spacing: -.15px; color: #9ca3af; box-shadow: 0 2px 4px rgba(0,0,0,.05); }
.search-button { width: 96px; height: 84px; border-radius: 16px; background: #3662e3; color: #fff; display: flex; align-items: center; justify-content: center; }
.chips { display: flex; align-items: center; gap: 16px; }
.chip { display: flex; align-items: center; gap: 16px; height: 80px; padding: 0 32px; border-radius: 16px; background: #fff; color: #374151; font-size: 31px; font-weight: 500; letter-spacing: -.6px; box-shadow: 0 2px 4px rgba(0,0,0,.06); }
.chip-near { width: 240px; height: 72px; border-radius: 16px; background: #dcf7e4; }
.notice { display: flex; align-items: center; gap: 16px; height: 72px; padding: 0 24px; border-radius: 16px; background: #fff; color: #4b5563; letter-spacing: -.35px; box-shadow: 0 2px 4px rgba(0,0,0,.05); }
.notice .icon { color: #47a150; }
.notice a { color: #3662e3; font-weight: 600; }
.map-control { position: absolute; left: 2862px; bottom: -45px; width: 58px; height: 58px; border-radius: 16px; background: #fff; }

.overlay { position: fixed; inset: 0; background: rgba(0,0,0,.5); display: flex; justify-content: center; padding-top: 80px; overflow: hidden; }
.modal { width: 1792px; height: 1700px; flex: none; background: #fff; border-radius: 32px; overflow: hidden; box-shadow: 0 50px 100px -24px rgba(0,0,0,.25); }
.modal-head { height: 344px; padding: 48px 48px 0; }
.title-row { display: flex; justify-content: space-between; align-items: flex-start; }
.modal-title { font-size: 48px; line-height: 64px; padding-top: 1px; margin-bottom: -1px; font-weight: 700; letter-spacing: -1.6px; }
.venue { display: flex; align-items: center; margin-top: 16px; height: 48px; color: #4b5563; }
.address { margin-left: 8px; }
.level { margin-left: 16px; height: 48px; padding: 0 16px; border-radius: 24px; background: #f3f4f6; color: #1f2937; font-size: 24px; font-weight: 500; line-height: 48px; letter-spacing: -.3px; }
.modal-actions { display: flex; align-items: center; gap: 16px; color: #9ca3af; }
.plain { padding: 16px; }
.tabs { display: flex; margin-top: 32px; height: 88px; padding: 8px; border-radius: 16px; background: #f3f4f6; }
.tab { flex: 1; display: flex; align-items: center; justify-content: center; gap: 16px; border-radius: 12px; color: #4b5563; font-weight: 500; letter-spacing: -.3px; }
.tab + .tab { margin-left: 8px; }
.tab.selected { background: #fff; color: #3662e3; box-shadow: 0 2px 4px rgba(0,0,0,.06); }
.chat-head { height: 156px; display: flex; align-items: center; gap: 24px; padding: 0 32px; background: #f9fafb; border: solid #e5e7eb; border-width: 2px 0; }
.chat-head > .icon { color: #3662e3; }
.chat-heading { flex: 1; }
.chat-title { font-size: 32px; line-height: 48px; padding-top: 1px; margin-bottom: -1px; font-weight: 600; letter-spacing: -.75px; }
.chat-count { color: #4b5563; }
.members { display: flex; align-items: center; gap: 16px; color: #4b5563; letter-spacing: 0; }
.members .icon { color: #9ca3af; }
.messages { display: flex; flex-direction: column; gap: 32px; padding: 64px 32px; }
.message { display: flex; align-items: flex-end; gap: 16px; }
.message.follow { padding-left: 80px; }
.meta { display: flex; align-items: center; gap: 16px; margin-bottom: 8px; }
.author { color: #374151; font-weight: 500; letter-spacing: -.3px; }
time { font-size: 24px; line-height: 32px; color: #6b7280; letter-spacing: -.08px; }
.reply { font-size: 24px; line-height: 32px; font-style: italic; color: #6b7280; margin-bottom: 8px; letter-spacing: -.06px; }
.bubble { padding: 16px 32px; border-radius: 32px; background: #f3f4f6; }
```
